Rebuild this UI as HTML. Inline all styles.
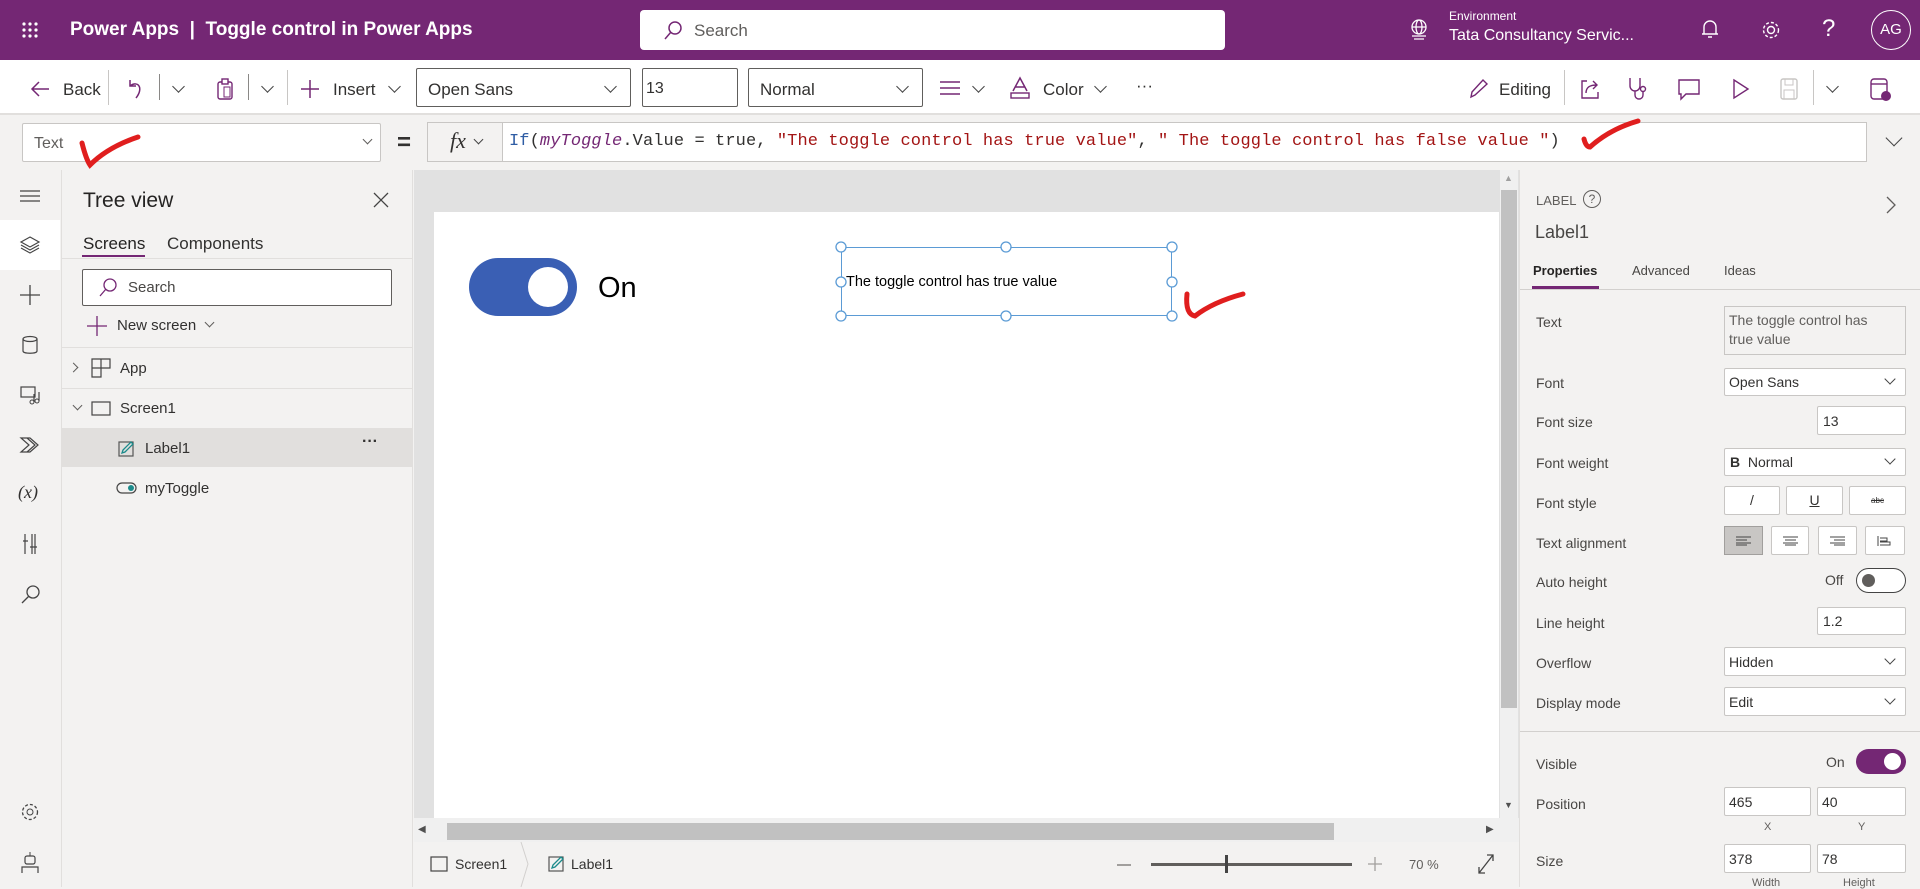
<!DOCTYPE html>
<html><head><meta charset="utf-8"><style>
*{box-sizing:border-box;margin:0;padding:0}
body{width:1920px;height:887px;overflow:hidden;background:#f3f2f1;font-family:"Liberation Sans",sans-serif;color:#323130;position:relative}
.a{position:absolute}
.t{position:absolute;white-space:nowrap}
svg{position:absolute;overflow:visible}
.box{position:absolute;background:#fff;border:1px solid #8a8886;border-radius:2px}
.pl{position:absolute;left:1536px;font-size:14px;color:#484644}
.chev{position:absolute;width:9px;height:9px;border-right:1.5px solid #444;border-bottom:1.5px solid #444;transform:rotate(45deg)}
</style></head><body>
<!-- header -->
<div class="a" style="left:0;top:0;width:1920px;height:60px;background:#742774"></div>
<svg style="left:22px;top:22px" width="16" height="16"><g fill="#fff"><circle cx="2" cy="2" r="1.6"/><circle cx="8" cy="2" r="1.6"/><circle cx="14" cy="2" r="1.6"/><circle cx="2" cy="8" r="1.6"/><circle cx="8" cy="8" r="1.6"/><circle cx="14" cy="8" r="1.6"/><circle cx="2" cy="14" r="1.6"/><circle cx="8" cy="14" r="1.6"/><circle cx="14" cy="14" r="1.6"/></g></svg>
<div class="t" style="left:70px;top:19px;font-size:19px;color:#fff;font-weight:bold">Power Apps &nbsp;|&nbsp; Toggle control in Power Apps</div>
<div class="a" style="left:640px;top:10px;width:585px;height:40px;background:#fff;border-radius:4px"></div>
<svg style="left:663px;top:20px" width="20" height="20"><circle cx="12" cy="8" r="6" fill="none" stroke="#742774" stroke-width="1.5"/><path d="M8 12 L2 19" stroke="#742774" stroke-width="1.5"/></svg>
<div class="t" style="left:694px;top:21px;font-size:17px;color:#605e5c">Search</div>
<svg style="left:1409px;top:18px" width="20" height="22"><g fill="none" stroke="#fff" stroke-width="1.3"><circle cx="10" cy="9" r="7"/><ellipse cx="10" cy="9" rx="3" ry="7"/><path d="M3 9h14M3 18h14M5 21h10"/></g></svg>
<div class="t" style="left:1449px;top:9px;font-size:12px;color:#fff">Environment</div>
<div class="t" style="left:1449px;top:27px;font-size:16px;color:#fff">Tata Consultancy Servic...</div>
<svg style="left:1701px;top:19px" width="18" height="22"><path d="M3 15 V8 a6 6 0 0 1 12 0 V15 Z M1 15h16 M7 18h4" fill="none" stroke="#fff" stroke-width="1.4"/></svg>
<svg style="left:1760px;top:19px" width="22" height="22"><circle cx="11" cy="11" r="3.5" fill="none" stroke="#fff" stroke-width="1.4"/><circle cx="11" cy="11" r="7.5" fill="none" stroke="#fff" stroke-width="1.4" stroke-dasharray="3 2"/></svg>
<div class="t" style="left:1822px;top:15px;font-size:24px;color:#fff">?</div>
<div class="a" style="left:1871px;top:10px;width:40px;height:40px;border:1.3px solid #fff;border-radius:50%;color:#fff;font-size:15px;text-align:center;line-height:38px">AG</div>
<!-- toolbar -->
<div class="a" style="left:0;top:60px;width:1920px;height:55px;background:#fff;border-bottom:2px solid #e1dfdd"></div>
<svg style="left:30px;top:80px" width="20" height="18"><path d="M19 9H2M9 2L2 9l7 7" fill="none" stroke="#742774" stroke-width="1.5"/></svg>
<div class="t" style="left:63px;top:80px;font-size:17px">Back</div>
<div class="a" style="left:108px;top:70px;width:1px;height:35px;background:#c8c6c4"></div>
<svg style="left:127px;top:78px" width="16" height="22"><path d="M3 2v6h6M3 8c8-6 14 2 6 12" fill="none" stroke="#742774" stroke-width="1.5"/></svg>
<div class="a" style="left:159px;top:74px;width:1px;height:26px;background:#8a8886"></div>
<div class="chev" style="left:174px;top:82px"></div>
<svg style="left:217px;top:78px" width="16" height="22"><rect x="1" y="4" width="14" height="17" rx="2" fill="none" stroke="#742774" stroke-width="1.4"/><rect x="5" y="1" width="6" height="5" fill="#fff" stroke="#742774" stroke-width="1.4"/><rect x="7" y="9" width="6" height="10" fill="none" stroke="#742774"/></svg>
<div class="a" style="left:248px;top:74px;width:1px;height:26px;background:#8a8886"></div>
<div class="chev" style="left:263px;top:82px"></div>
<div class="a" style="left:287px;top:70px;width:1px;height:35px;background:#c8c6c4"></div>
<svg style="left:300px;top:79px" width="20" height="20"><path d="M10 1v18M1 10h18" stroke="#742774" stroke-width="1.5"/></svg>
<div class="t" style="left:333px;top:80px;font-size:17px">Insert</div>
<div class="chev" style="left:390px;top:82px"></div>
<div class="box" style="left:416px;top:68px;width:215px;height:39px;border-color:#605e5c"></div>
<div class="t" style="left:428px;top:80px;font-size:17px">Open Sans</div>
<div class="chev" style="left:606px;top:82px"></div>
<div class="box" style="left:642px;top:68px;width:96px;height:39px;border-color:#605e5c"></div>
<div class="t" style="left:646px;top:80px;font-size:16px">13</div>
<div class="box" style="left:748px;top:68px;width:175px;height:39px;border-color:#605e5c"></div>
<div class="t" style="left:760px;top:80px;font-size:17px">Normal</div>
<div class="chev" style="left:898px;top:82px"></div>
<svg style="left:940px;top:81px" width="20" height="14"><path d="M0 1h20M0 7h20M0 13h20" stroke="#742774" stroke-width="1.5"/></svg>
<div class="chev" style="left:974px;top:82px"></div>
<svg style="left:1010px;top:77px" width="20" height="22"><path d="M3 14L10 1l7 13M5.5 10h9" fill="none" stroke="#742774" stroke-width="1.5"/><rect x="1" y="16" width="18" height="5" fill="none" stroke="#742774" stroke-width="1.4"/></svg>
<div class="t" style="left:1043px;top:80px;font-size:17px">Color</div>
<div class="chev" style="left:1096px;top:82px"></div>
<div class="t" style="left:1136px;top:76px;font-size:17px">···</div>
<svg style="left:1468px;top:78px" width="20" height="22"><path d="M3 19l1-5L15 2l4 4L7 17z" fill="none" stroke="#742774" stroke-width="1.4"/></svg>
<div class="t" style="left:1499px;top:80px;font-size:17px">Editing</div>
<div class="a" style="left:1564px;top:70px;width:1px;height:35px;background:#c8c6c4"></div>
<svg style="left:1580px;top:78px" width="20" height="22"><path d="M7 3H2v17h16v-6 M6 15c0-6 4-8 11-8 M13 3l4 4-4 4" fill="none" stroke="#742774" stroke-width="1.4"/></svg>
<svg style="left:1628px;top:77px" width="20" height="24"><path d="M2 1v8a5 5 0 0 0 10 0V1 M7 14v4a4 4 0 0 0 8 0v-4" fill="none" stroke="#742774" stroke-width="1.4"/><circle cx="15" cy="12" r="2.5" fill="none" stroke="#742774" stroke-width="1.4"/></svg>
<svg style="left:1678px;top:79px" width="22" height="22"><path d="M1 1h20v14H8l-5 5v-5H1z" fill="none" stroke="#742774" stroke-width="1.4"/></svg>
<svg style="left:1732px;top:79px" width="18" height="20"><path d="M2 1l14 9-14 9z" fill="none" stroke="#742774" stroke-width="1.4"/></svg>
<svg style="left:1780px;top:78px" width="18" height="22"><rect x="1" y="1" width="16" height="20" rx="2" fill="none" stroke="#c8c6c4" stroke-width="1.4"/><rect x="5" y="1" width="8" height="6" fill="none" stroke="#c8c6c4"/><rect x="4" y="12" width="10" height="9" fill="none" stroke="#c8c6c4"/></svg>
<div class="a" style="left:1813px;top:70px;width:1px;height:35px;background:#c8c6c4"></div>
<div class="chev" style="left:1828px;top:82px"></div>
<svg style="left:1870px;top:78px" width="22" height="24"><rect x="1" y="1" width="16" height="20" rx="3" fill="none" stroke="#742774" stroke-width="1.4"/><path d="M1 6h16" stroke="#742774" stroke-width="1.4"/><circle cx="16" cy="18" r="5" fill="#742774"/></svg>
<!-- formula bar -->
<div class="box" style="left:22px;top:123px;width:359px;height:39px;border-color:#c8c6c4"></div>
<div class="t" style="left:34px;top:135px;font-size:16px;color:#605e5c">Text</div>
<div class="chev" style="left:364px;top:136px;width:7px;height:7px;border-color:#605e5c"></div>
<div class="t" style="left:397px;top:129px;font-size:24px;font-weight:bold">=</div>
<div class="a" style="left:427px;top:122px;width:1440px;height:40px;background:#fff;border:1px solid #c8c6c4"></div>
<div class="a" style="left:427px;top:122px;width:76px;height:40px;background:#f3f2f1;border:1px solid #c8c6c4"></div>
<div class="t" style="left:450px;top:128px;font-size:22px;font-family:'Liberation Serif',serif;font-style:italic">fx</div>
<div class="chev" style="left:475px;top:136px;width:7px;height:7px"></div>
<div class="t" style="left:509px;top:132px;font-size:17px;letter-spacing:0.1px;font-family:'Liberation Mono',monospace;color:#323130"><span style="color:#2f5da4">If</span>(<i style="color:#742774">myToggle</i>.Value = true, <span style="color:#a31515">"The toggle control has true value"</span>, <span style="color:#a31515">" The toggle control has false value "</span>)</div>
<div class="chev" style="left:1888px;top:132px;width:12px;height:12px"></div>
<!-- left rail -->
<div class="a" style="left:0;top:170px;width:62px;height:717px;background:#f3f2f1;border-right:1px solid #e1dfdd"></div>
<svg style="left:20px;top:190px" width="20" height="12"><path d="M0 1h20M0 6h20M0 11h20" stroke="#444" stroke-width="1.2"/></svg>
<div class="a" style="left:0;top:220px;width:60px;height:50px;background:#fff"></div>
<svg style="left:20px;top:236px" width="20" height="18"><path d="M10 1l9 5-9 5-9-5z M1 9l9 5 9-5 M1 12l9 5 9-5" fill="none" stroke="#444" stroke-width="1.2"/></svg>
<svg style="left:20px;top:285px" width="20" height="20"><path d="M10 0v20M0 10h20" stroke="#444" stroke-width="1.3"/></svg>
<svg style="left:22px;top:336px" width="16" height="18"><ellipse cx="8" cy="3" rx="7" ry="2.5" fill="none" stroke="#444" stroke-width="1.2"/><path d="M1 3v12c0 3 14 3 14 0V3" fill="none" stroke="#444" stroke-width="1.2"/></svg>
<svg style="left:20px;top:386px" width="20" height="18"><rect x="1" y="1" width="14" height="10" fill="none" stroke="#444" stroke-width="1.2"/><path d="M14 8v8M19 6v9" stroke="#444" stroke-width="1.2"/><circle cx="12" cy="16" r="2" fill="none" stroke="#444"/><circle cx="17" cy="15" r="2" fill="none" stroke="#444"/></svg>
<svg style="left:20px;top:437px" width="20" height="16"><path d="M1 1h9l8 7-8 7H1l8-7z M7 1l8 7-8 7" fill="none" stroke="#444" stroke-width="1.2"/></svg>
<div class="t" style="left:18px;top:482px;font-size:18px;font-family:'Liberation Serif',serif;font-style:italic">(x)</div>
<svg style="left:22px;top:533px" width="16" height="22"><path d="M3 1v20M10 1v20M13 1v20M1 8h5M8 14h7" stroke="#444" stroke-width="1.2"/></svg>
<svg style="left:21px;top:584px" width="20" height="20"><circle cx="12" cy="8" r="6" fill="none" stroke="#444" stroke-width="1.3"/><path d="M8 12L1 19" stroke="#444" stroke-width="1.3"/></svg>
<svg style="left:20px;top:802px" width="20" height="20"><circle cx="10" cy="10" r="3" fill="none" stroke="#444"/><circle cx="10" cy="10" r="7.5" fill="none" stroke="#444" stroke-width="1.3" stroke-dasharray="3 2"/></svg>
<svg style="left:21px;top:852px" width="18" height="22"><path d="M9 0v4" stroke="#444"/><rect x="4" y="4" width="10" height="8" rx="2" fill="none" stroke="#444" stroke-width="1.2"/><path d="M1 21v-6h16v6" fill="none" stroke="#444" stroke-width="1.2"/></svg>
<!-- tree panel -->
<div class="a" style="left:62px;top:170px;width:351px;height:717px;background:#f3f2f1;border-right:1px solid #e1dfdd"></div>
<div class="t" style="left:83px;top:189px;font-size:21px;color:#252423">Tree view</div>
<svg style="left:374px;top:193px" width="14" height="14"><path d="M0 0l14 14M14 0L0 14" stroke="#444" stroke-width="1.3"/></svg>
<div class="t" style="left:83px;top:234px;font-size:17px;color:#252423">Screens</div>
<div class="a" style="left:82px;top:255px;width:63px;height:2px;background:#742774"></div>
<div class="t" style="left:167px;top:234px;font-size:17px">Components</div>
<div class="a" style="left:62px;top:258px;width:350px;height:1px;background:#e1dfdd"></div>
<div class="box" style="left:82px;top:269px;width:310px;height:37px;border-color:#605e5c"></div>
<svg style="left:98px;top:277px" width="20" height="20"><circle cx="12" cy="8" r="6" fill="none" stroke="#742774" stroke-width="1.3"/><path d="M8 12L2 19" stroke="#742774" stroke-width="1.3"/></svg>
<div class="t" style="left:128px;top:279px;font-size:15px;color:#484644">Search</div>
<svg style="left:87px;top:316px" width="20" height="20"><path d="M10 0v20M0 10h20" stroke="#742774" stroke-width="1.3"/></svg>
<div class="t" style="left:117px;top:317px;font-size:15px">New screen</div>
<div class="chev" style="left:206px;top:319px;width:7px;height:7px;border-color:#605e5c"></div>
<div class="a" style="left:62px;top:347px;width:350px;height:1px;background:#e1dfdd"></div>
<div class="chev" style="left:70px;top:364px;width:7px;height:7px;transform:rotate(-45deg);border-color:#605e5c"></div>
<svg style="left:91px;top:358px" width="20" height="20"><path d="M1 1h18v9H10v9H1z M1 10h9 M10 1v9" fill="none" stroke="#444" stroke-width="1.2"/></svg>
<div class="t" style="left:120px;top:360px;font-size:15px">App</div>
<div class="a" style="left:62px;top:388px;width:350px;height:1px;background:#e1dfdd"></div>
<div class="chev" style="left:74px;top:402px;width:7px;height:7px;border-color:#605e5c"></div>
<svg style="left:91px;top:401px" width="20" height="15"><rect x="1" y="1" width="18" height="13" fill="none" stroke="#444" stroke-width="1.2"/></svg>
<div class="t" style="left:120px;top:400px;font-size:15px">Screen1</div>
<div class="a" style="left:62px;top:428px;width:350px;height:39px;background:#e1dfdd"></div>
<svg style="left:118px;top:440px" width="16" height="17"><rect x="1" y="2" width="14" height="14" fill="none" stroke="#555" stroke-width="1.2"/><path d="M4 13l1-3 8-8 2 2-8 8z" fill="none" stroke="#1b8b8b" stroke-width="1.3"/></svg>
<div class="t" style="left:145px;top:440px;font-size:15px">Label1</div>
<div class="t" style="left:362px;top:433px;font-size:16px;font-weight:bold">···</div>
<svg style="left:116px;top:482px" width="22" height="12"><rect x="1" y="1" width="19" height="10" rx="5" fill="none" stroke="#444" stroke-width="1.2"/><circle cx="15" cy="6" r="3" fill="#1b8b8b"/></svg>
<div class="t" style="left:145px;top:480px;font-size:15px">myToggle</div>
<!-- canvas -->
<div class="a" style="left:414px;top:170px;width:1105px;height:672px;background:#e1e1e1"></div>
<div class="a" style="left:434px;top:212px;width:1065px;height:606px;background:#fff"></div>
<div class="a" style="left:469px;top:258px;width:108px;height:58px;border-radius:29px;background:#3a5fb4"></div>
<div class="a" style="left:528px;top:267px;width:40px;height:40px;border-radius:50%;background:#fff"></div>
<div class="t" style="left:598px;top:272px;font-size:29px;color:#000">On</div>
<div class="a" style="left:841px;top:247px;width:331px;height:69px;border:1.3px solid #5b9bd5"></div>
<div class="t" style="left:846px;top:274px;font-size:14.5px;color:#000">The toggle control has true value</div>
<svg style="left:836px;top:242px" width="342" height="80"><g fill="#fff" stroke="#5b9bd5" stroke-width="1.3"><circle cx="5" cy="5" r="5"/><circle cx="170" cy="5" r="5"/><circle cx="336" cy="5" r="5"/><circle cx="5" cy="40" r="5"/><circle cx="336" cy="40" r="5"/><circle cx="5" cy="74" r="5"/><circle cx="170" cy="74" r="5"/><circle cx="336" cy="74" r="5"/></g></svg>
<!-- scrollbars -->
<div class="a" style="left:1500px;top:170px;width:18px;height:648px;background:#f0f0f0"></div>
<div class="a" style="left:1501px;top:190px;width:16px;height:518px;background:#c1c1c1"></div>
<div class="t" style="left:1504px;top:173px;font-size:9px;color:#a0a0a0">▲</div>
<div class="t" style="left:1504px;top:800px;font-size:9px;color:#505050">▼</div>
<div class="a" style="left:414px;top:818px;width:1105px;height:24px;background:#f0f0f0"></div>
<div class="a" style="left:447px;top:823px;width:887px;height:17px;background:#c1c1c1"></div>
<div class="t" style="left:418px;top:824px;font-size:10px;color:#505050">◀</div>
<div class="t" style="left:1486px;top:824px;font-size:10px;color:#505050">▶</div>
<!-- status bar -->
<div class="a" style="left:414px;top:842px;width:1105px;height:45px;background:#f3f2f1"></div>
<svg style="left:430px;top:856px" width="18" height="16"><rect x="1" y="1" width="16" height="14" fill="none" stroke="#444" stroke-width="1.2"/></svg>
<div class="t" style="left:455px;top:856px;font-size:14px">Screen1</div>
<svg style="left:520px;top:842px" width="10" height="45"><path d="M1 0l7 22-7 23" fill="none" stroke="#d2d0ce"/></svg>
<svg style="left:548px;top:855px" width="16" height="17"><rect x="1" y="2" width="14" height="14" fill="none" stroke="#555" stroke-width="1.2"/><path d="M4 13l1-3 8-8 2 2-8 8z" fill="none" stroke="#1b8b8b" stroke-width="1.3"/></svg>
<div class="t" style="left:571px;top:856px;font-size:14px">Label1</div>
<div class="a" style="left:1117px;top:864px;width:14px;height:1.5px;background:#a19f9d"></div>
<div class="a" style="left:1151px;top:863px;width:201px;height:3px;background:#605e5c"></div>
<div class="a" style="left:1225px;top:855px;width:3px;height:18px;background:#444"></div>
<svg style="left:1368px;top:857px" width="14" height="14"><path d="M7 0v14M0 7h14" stroke="#a19f9d" stroke-width="1.3"/></svg>
<div class="t" style="left:1409px;top:857px;font-size:13px;color:#605e5c">70 %</div>
<svg style="left:1477px;top:853px" width="18" height="22"><path d="M2 20L16 2M10 2h6v6M2 14v6h6" fill="none" stroke="#444" stroke-width="1.3"/></svg>
<!-- right panel -->
<div class="a" style="left:1519px;top:170px;width:401px;height:717px;background:#f3f2f1;border-left:1px solid #e1dfdd"></div>
<div class="t" style="left:1536px;top:193px;font-size:13px;color:#605e5c">LABEL</div>
<div class="a" style="left:1583px;top:190px;width:18px;height:18px;border:1.2px solid #605e5c;border-radius:50%;font-size:12px;text-align:center;line-height:16px;color:#605e5c">?</div>
<svg style="left:1886px;top:196px" width="10" height="18"><path d="M1 1l8 8-8 8" fill="none" stroke="#605e5c" stroke-width="1.3"/></svg>
<div class="t" style="left:1535px;top:222px;font-size:18px;color:#484644">Label1</div>
<div class="t" style="left:1533px;top:263px;font-size:13px;font-weight:bold;color:#252423">Properties</div>
<div class="a" style="left:1532px;top:286px;width:67px;height:2.5px;background:#742774"></div>
<div class="t" style="left:1632px;top:263px;font-size:13px;color:#484644">Advanced</div>
<div class="t" style="left:1724px;top:263px;font-size:13px;color:#484644">Ideas</div>
<div class="a" style="left:1520px;top:289px;width:400px;height:1px;background:#d2d0ce"></div>
<div class="pl" style="top:314px">Text</div>
<div class="a" style="left:1724px;top:306px;width:182px;height:49px;border:1px solid #c8c6c4;background:#f3f2f1"></div>
<div class="t" style="left:1729px;top:311px;font-size:14px;color:#605e5c;line-height:19px">The toggle control has<br>true value</div>
<div class="pl" style="top:375px">Font</div>
<div class="box" style="left:1724px;top:368px;width:182px;height:28px;border-color:#c8c6c4"></div>
<div class="t" style="left:1729px;top:374px;font-size:14px">Open Sans</div>
<div class="chev" style="left:1886px;top:375px;width:8px;height:8px"></div>
<div class="pl" style="top:414px">Font size</div>
<div class="box" style="left:1817px;top:406px;width:89px;height:29px;border-color:#c8c6c4"></div>
<div class="t" style="left:1823px;top:413px;font-size:14px">13</div>
<div class="pl" style="top:455px">Font weight</div>
<div class="box" style="left:1724px;top:448px;width:182px;height:28px;border-color:#c8c6c4"></div>
<div class="t" style="left:1730px;top:454px;font-size:14px"><b>B</b>&nbsp;&nbsp;Normal</div>
<div class="chev" style="left:1886px;top:455px;width:8px;height:8px"></div>
<div class="pl" style="top:495px">Font style</div>
<div class="box" style="left:1724px;top:486px;width:56px;height:29px;border-color:#c8c6c4;text-align:center;font-size:14px;line-height:27px">/</div>
<div class="box" style="left:1786px;top:486px;width:57px;height:29px;border-color:#c8c6c4;text-align:center;font-size:14px;line-height:27px;text-decoration:underline">U</div>
<div class="box" style="left:1849px;top:486px;width:57px;height:29px;border-color:#c8c6c4;text-align:center;font-size:8px;line-height:27px;text-decoration:line-through">abc</div>
<div class="pl" style="top:535px">Text alignment</div>
<div class="a" style="left:1724px;top:526px;width:39px;height:29px;background:#c8c6c4;border:1px solid #a19f9d"></div>
<div class="box" style="left:1771px;top:526px;width:38px;height:29px;border-color:#c8c6c4"></div>
<div class="box" style="left:1818px;top:526px;width:39px;height:29px;border-color:#c8c6c4"></div>
<div class="box" style="left:1865px;top:526px;width:40px;height:29px;border-color:#c8c6c4"></div>
<svg style="left:1736px;top:536px" width="170" height="10"><g stroke="#444" stroke-width="1"><path d="M0 1h15M0 4h11M0 7h15M0 9h11"/><path d="M47 1h15M49 4h11M47 7h15M49 9h11"/><path d="M94 1h15M98 4h11M94 7h15M98 9h11"/><path d="M142 0v10M144 2h7v3h-7M144 6h10v3h-10" fill="none"/></g></svg>
<div class="pl" style="top:574px">Auto height</div>
<div class="t" style="left:1825px;top:572px;font-size:14px;color:#484644">Off</div>
<div class="a" style="left:1856px;top:568px;width:50px;height:25px;border:1.3px solid #444;border-radius:13px;background:#fff"></div>
<div class="a" style="left:1862px;top:574px;width:13px;height:13px;border-radius:50%;background:#605e5c"></div>
<div class="pl" style="top:615px">Line height</div>
<div class="box" style="left:1817px;top:607px;width:89px;height:28px;border-color:#c8c6c4"></div>
<div class="t" style="left:1823px;top:613px;font-size:14px">1.2</div>
<div class="pl" style="top:655px">Overflow</div>
<div class="box" style="left:1724px;top:647px;width:182px;height:29px;border-color:#c8c6c4"></div>
<div class="t" style="left:1729px;top:654px;font-size:14px">Hidden</div>
<div class="chev" style="left:1886px;top:655px;width:8px;height:8px"></div>
<div class="pl" style="top:695px">Display mode</div>
<div class="box" style="left:1724px;top:687px;width:182px;height:29px;border-color:#c8c6c4"></div>
<div class="t" style="left:1729px;top:694px;font-size:14px">Edit</div>
<div class="chev" style="left:1886px;top:695px;width:8px;height:8px"></div>
<div class="a" style="left:1520px;top:731px;width:400px;height:1px;background:#d2d0ce"></div>
<div class="pl" style="top:756px">Visible</div>
<div class="t" style="left:1826px;top:754px;font-size:14px;color:#484644">On</div>
<div class="a" style="left:1856px;top:749px;width:50px;height:25px;border-radius:13px;background:#742774"></div>
<div class="a" style="left:1884px;top:753px;width:17px;height:17px;border-radius:50%;background:#fff"></div>
<div class="pl" style="top:796px">Position</div>
<div class="box" style="left:1724px;top:787px;width:87px;height:29px;border-color:#c8c6c4"></div>
<div class="t" style="left:1729px;top:794px;font-size:14px">465</div>
<div class="box" style="left:1817px;top:787px;width:89px;height:29px;border-color:#c8c6c4"></div>
<div class="t" style="left:1822px;top:794px;font-size:14px">40</div>
<div class="t" style="left:1764px;top:821px;font-size:11px;color:#605e5c">X</div>
<div class="t" style="left:1858px;top:821px;font-size:11px;color:#605e5c">Y</div>
<div class="pl" style="top:853px">Size</div>
<div class="box" style="left:1724px;top:844px;width:87px;height:29px;border-color:#c8c6c4"></div>
<div class="t" style="left:1729px;top:851px;font-size:14px">378</div>
<div class="box" style="left:1817px;top:844px;width:89px;height:29px;border-color:#c8c6c4"></div>
<div class="t" style="left:1822px;top:851px;font-size:14px">78</div>
<div class="t" style="left:1752px;top:877px;font-size:11px;color:#605e5c">Width</div>
<div class="t" style="left:1843px;top:877px;font-size:11px;color:#605e5c">Height</div>
<!-- red checkmarks -->
<svg style="left:78px;top:133px" width="66" height="40"><path d="M4 10 Q8 26 12 32 Q30 14 60 4" fill="none" stroke="#e01e1e" stroke-width="5" stroke-linecap="round"/></svg>
<svg style="left:1580px;top:117px" width="66" height="36"><path d="M4 22 Q6 30 10 30 Q30 12 58 4" fill="none" stroke="#e01e1e" stroke-width="5" stroke-linecap="round"/></svg>
<svg style="left:1183px;top:288px" width="66" height="40"><path d="M4 6 Q2 26 12 28 Q30 14 60 6" fill="none" stroke="#e01e1e" stroke-width="5" stroke-linecap="round"/></svg>
</body></html>
